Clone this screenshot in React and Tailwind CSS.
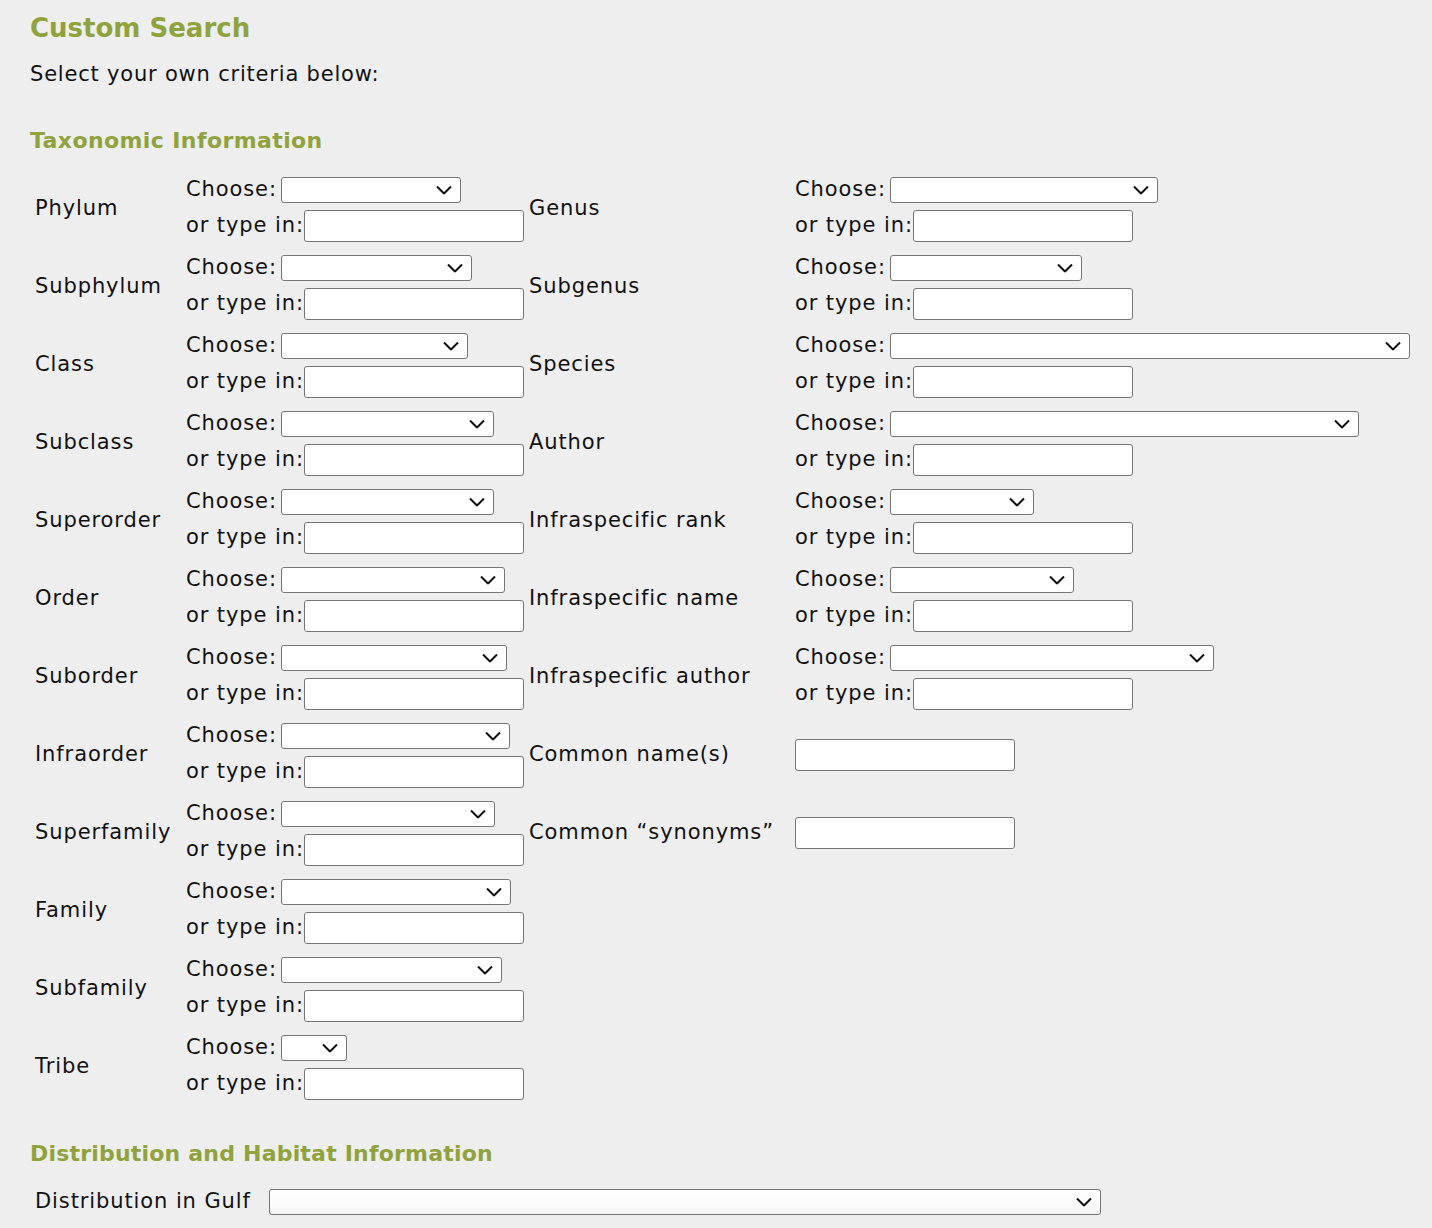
import React from "react";

const GREEN = "text-[#8fa23c]";

function Chevron() {
  return (
    <svg width="16" height="9" viewBox="0 0 16 9" className="pointer-events-none absolute right-[9px] top-1/2 -translate-y-1/2">
      <polyline points="1,1 8,8 15,1" fill="none" stroke="#111" strokeWidth="2" />
    </svg>
  );
}

function Select({ w, gradient }) {
  return (
    <div className="relative shrink-0" style={{ width: w }}>
      <div className={`h-[26px] w-full rounded-[3px] border border-[#767676] ${gradient ? "bg-gradient-to-b from-white to-[#f6f6f6]" : "bg-white"}`} />
      <Chevron />
    </div>
  );
}

function Input({ className = "" }) {
  return <div className={`h-[32px] w-[220px] shrink-0 rounded-[3px] border border-[#767676] bg-white ${className}`} />;
}

function ChooseCell({ w }) {
  return (
    <div className="flex flex-col pt-[3px] pb-[1px]">
      <div className="flex h-[34px] items-center">
        <span className="w-[95px] shrink-0 whitespace-nowrap">Choose:</span>
        <Select w={w} />
      </div>
      <div className="flex h-[38px] items-center">
        <span className="w-[118px] shrink-0 whitespace-nowrap">or type in:</span>
        <Input />
      </div>
    </div>
  );
}

const left = [
  ["Phylum", 180],
  ["Subphylum", 191],
  ["Class", 187],
  ["Subclass", 213],
  ["Superorder", 213],
  ["Order", 224],
  ["Suborder", 226],
  ["Infraorder", 229],
  ["Superfamily", 214],
  ["Family", 230],
  ["Subfamily", 221],
  ["Tribe", 66],
];

const right = [
  ["Genus", 268],
  ["Subgenus", 192],
  ["Species", 520],
  ["Author", 469],
  ["Infraspecific rank", 144],
  ["Infraspecific name", 184],
  ["Infraspecific author", 324],
  ["Common name(s)", null],
  ["Common \u201csynonyms\u201d", null],
];

export default function App() {
  return (
    <div
      className="min-h-screen bg-[#eeeeee] px-[30px] pt-[10px] pb-[20px] text-[#111111]"
      style={{ fontFamily: '"DejaVu Sans", "Noto Sans", sans-serif' }}
    >
      <h1 className={`text-[26px] font-bold leading-[36px] ${GREEN}`}>Custom Search</h1>
      <p className="mt-[14px] text-[21px] leading-[28px] tracking-[0.8px]">Select your own criteria below:</p>
      <h2 className={`mt-[38px] text-[22px] font-bold leading-[30px] tracking-[0.4px] ${GREEN}`}>Taxonomic Information</h2>

      <div className="mt-[14px] flex flex-col text-[21px] tracking-[0.9px]">
        {left.map(([label, w], i) => {
          const r = right[i];
          return (
            <div key={label} className="flex h-[78px]">
              <div className="flex w-[156px] shrink-0 items-center pl-[5px] whitespace-nowrap">{label}</div>
              <div className="w-[343px] shrink-0">
                <ChooseCell w={w} />
              </div>
              <div className="flex w-[266px] shrink-0 items-center whitespace-nowrap">{r ? r[0] : ""}</div>
              <div className="flex-1">
                {r && r[1] !== null && <ChooseCell w={r[1]} />}
                {r && r[1] === null && (
                  <div className="flex h-[78px] items-center">
                    <Input />
                  </div>
                )}
              </div>
            </div>
          );
        })}
      </div>

      <h2 className={`mt-[33px] text-[22px] font-bold leading-[30px] tracking-[0.2px] ${GREEN}`}>Distribution and Habitat Information</h2>
      <div className="mt-[18px] flex h-[30px] items-center text-[21px] tracking-[0.9px]">
        <span className="w-[239px] shrink-0 pl-[5px] whitespace-nowrap">Distribution in Gulf</span>
        <Select w={832} gradient />
      </div>
    </div>
  );
}
